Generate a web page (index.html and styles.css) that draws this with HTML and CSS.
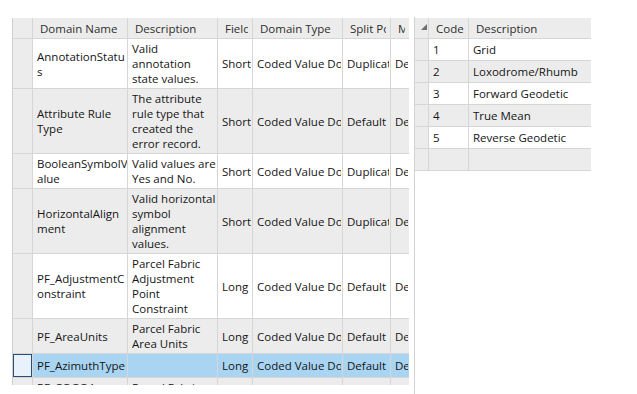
FILE: index.html
```html
<!DOCTYPE html>
<html lang="en">
<head>
  <meta charset="UTF-8">
  <meta name="viewport" content="width=device-width, initial-scale=1.0">
  <title>Domains</title>
  <link rel="stylesheet" href="styles.css">
</head>
<body>
  <div class="window">
    <div class="pane domains">
      <table class="grid">
        <thead>
          <tr>
            <th class="rh w-rh"></th>
            <th class="w-name">Domain Name</th>
            <th class="w-desc">Description</th>
            <th class="w-field"><div class="cut">Field Type</div></th>
            <th class="w-type"><div class="cut">Domain Type</div></th>
            <th class="w-split"><div class="cut">Split Policy</div></th>
            <th class="w-merge last"><div class="cut">Merge Policy</div></th>
          </tr>
        </thead>
        <tbody>
          <tr>
            <td class="rh"></td>
            <td>AnnotationStatu<br>s</td>
            <td>Valid<br>annotation<br>state values.</td>
            <td><div class="cut">Short</div></td>
            <td><div class="cut">Coded Value Domain</div></td>
            <td><div class="cut">Duplicate</div></td>
            <td class="last"><div class="cut">Default</div></td>
          </tr>
          <tr>
            <td class="rh"></td>
            <td>Attribute Rule<br>Type</td>
            <td>The attribute<br>rule type that<br>created the<br>error record.</td>
            <td><div class="cut">Short</div></td>
            <td><div class="cut">Coded Value Domain</div></td>
            <td><div class="cut">Default</div></td>
            <td class="last"><div class="cut">Default</div></td>
          </tr>
          <tr>
            <td class="rh"></td>
            <td>BooleanSymbolV<br>alue</td>
            <td>Valid values are<br>Yes and No.</td>
            <td><div class="cut">Short</div></td>
            <td><div class="cut">Coded Value Domain</div></td>
            <td><div class="cut">Duplicate</div></td>
            <td class="last"><div class="cut">Default</div></td>
          </tr>
          <tr>
            <td class="rh"></td>
            <td>HorizontalAlign<br>ment</td>
            <td>Valid horizontal<br>symbol<br>alignment<br>values.</td>
            <td><div class="cut">Short</div></td>
            <td><div class="cut">Coded Value Domain</div></td>
            <td><div class="cut">Duplicate</div></td>
            <td class="last"><div class="cut">Default</div></td>
          </tr>
          <tr>
            <td class="rh"></td>
            <td>PF_AdjustmentC<br>onstraint</td>
            <td>Parcel Fabric<br>Adjustment<br>Point<br>Constraint</td>
            <td><div class="cut">Long</div></td>
            <td><div class="cut">Coded Value Domain</div></td>
            <td><div class="cut">Default</div></td>
            <td class="last"><div class="cut">Default</div></td>
          </tr>
          <tr>
            <td class="rh"></td>
            <td>PF_AreaUnits</td>
            <td>Parcel Fabric<br>Area Units</td>
            <td><div class="cut">Long</div></td>
            <td><div class="cut">Coded Value Domain</div></td>
            <td><div class="cut">Default</div></td>
            <td class="last"><div class="cut">Default</div></td>
          </tr>
          <tr class="sel">
            <td class="rh"></td>
            <td>PF_AzimuthType</td>
            <td></td>
            <td><div class="cut">Long</div></td>
            <td><div class="cut">Coded Value Domain</div></td>
            <td><div class="cut">Default</div></td>
            <td class="last"><div class="cut">Default</div></td>
          </tr>
          <tr>
            <td class="rh"></td>
            <td>PF_COGOAccura<br>cy</td>
            <td>Parcel Fabric<br>COGO Accuracy</td>
            <td><div class="cut">Long</div></td>
            <td><div class="cut">Coded Value Domain</div></td>
            <td><div class="cut">Default</div></td>
            <td class="last"><div class="cut">Default</div></td>
          </tr>
        </tbody>
      </table>
    </div>

    <div class="splitter"></div>

    <div class="pane codes">
      <table class="grid">
        <thead>
          <tr>
            <th class="rh corner w-crh">
              <svg width="6" height="6" viewBox="0 0 6 6"><polygon points="6,0 6,6 0,6" fill="#6e6e6e"/></svg>
            </th>
            <th class="w-code">Code</th>
            <th class="w-cdesc last">Description</th>
          </tr>
        </thead>
        <tbody>
          <tr><td class="rh"></td><td>1</td><td class="last">Grid</td></tr>
          <tr><td class="rh"></td><td>2</td><td class="last">Loxodrome/Rhumb</td></tr>
          <tr><td class="rh"></td><td>3</td><td class="last">Forward Geodetic</td></tr>
          <tr><td class="rh"></td><td>4</td><td class="last">True Mean</td></tr>
          <tr><td class="rh"></td><td>5</td><td class="last">Reverse Geodetic</td></tr>
          <tr><td class="rh"></td><td></td><td class="last"></td></tr>
        </tbody>
      </table>
    </div>
  </div>
</body>
</html>
```

FILE: styles.css
```css
body {
  margin: 0;
  background: #fff;
  font-family: "Open Sans", "Noto Sans", sans-serif;
  font-size: 11.5px;
  color: #151515;
}

.window {
  display: flex;
  height: 394px;
  padding-top: 17px;
  box-sizing: border-box;
}

.pane {
  align-self: flex-start;
  margin-top: 1px;
  overflow: hidden;
}

.domains {
  margin-left: 12px;
  height: 367px;
  border-left: 1px solid #cfcfcf;
}

.splitter {
  width: 1px;
  margin-left: 5px;
  background: #d2d2d2;
}

.grid {
  border-collapse: separate;
  border-spacing: 0;
  table-layout: fixed;
}

.domains .grid {
  width: 396px;
}

.codes .grid {
  width: 176px;
}

.grid th,
.grid td {
  box-sizing: border-box;
  border-right: 1px solid #d6d6d6;
  border-bottom: 1px solid #d6d6d6;
  padding: 2px 0 2px 4px;
  line-height: 15px;
  white-space: nowrap;
  overflow: hidden;
  text-align: left;
  vertical-align: middle;
}

.grid th.last,
.grid td.last {
  border-right: none;
}

.grid th {
  background: #ececec;
  color: #2e2e2e;
  font-weight: normal;
  padding: 0 0 0 7px;
}

.grid thead tr {
  height: 21px;
}

.grid tbody tr {
  height: 24px;
}

.codes .grid tbody tr {
  height: 22px;
}

.grid tbody tr:nth-child(even) td {
  background: #ececec;
}

.grid .rh,
.grid tbody tr td.rh {
  background: #ececec;
  padding: 0;
}

.grid tr.sel td {
  background: #a9d5f3;
}

.grid tr.sel td.rh {
  background: #e9f2fa;
  box-shadow: inset 0 0 0 1px #2d4e74;
}

.cut {
  overflow: hidden;
  margin-right: 1px;
}

.grid th .cut {
  margin-right: 4px;
}

.corner {
  vertical-align: bottom;
  text-align: right;
}

.corner svg {
  display: block;
  margin: 0 1px 3px auto;
}

.w-rh { width: 20px; }
.w-name { width: 95px; }
.w-desc { width: 90px; }
.w-field { width: 35px; }
.w-type { width: 90px; }
.w-split { width: 48px; }
.w-merge { width: 18px; }

.w-crh { width: 14px; }
.w-code { width: 40px; }
.w-cdesc { width: 122px; }
```
